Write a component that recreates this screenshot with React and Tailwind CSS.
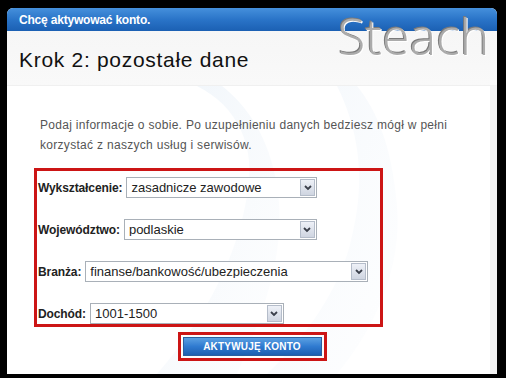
import React from 'react';

const fields = [
  { label: 'Wykształcenie:', value: 'zasadnicze zawodowe', width: 'w-[191px]' },
  { label: 'Województwo:', value: 'podlaskie', width: 'w-[193px]' },
  { label: 'Branża:', value: 'finanse/bankowość/ubezpieczenia', width: 'w-[283px]' },
  { label: 'Dochód:', value: '1001-1500', width: 'w-[194px]' },
];

function FakeSelect({ value, width }) {
  return (
    <div className={`${width} h-[21px] flex items-center bg-white border border-[#a9b0b8] pl-[4px] pr-[1px]`}>
      <span className="flex-1 text-[13px] text-[#222] leading-none truncate">{value}</span>
      <div className="w-[15px] h-[17px] flex items-center justify-center border border-[#b5bdca] bg-gradient-to-b from-[#eef1f7] to-[#cfd5e1]">
        <svg width="8" height="6" viewBox="0 0 8 6">
          <path d="M1 1 L4 4 L7 1" fill="none" stroke="#3a3f4a" strokeWidth="1.8" />
        </svg>
      </div>
    </div>
  );
}

export default function App() {
  return (
    <div className="relative w-[506px] h-[378px] bg-black pl-[7px] pt-[8px] pr-[9px] pb-[4px] font-['Liberation_Sans',Arial,sans-serif]">
      <div className="relative h-full flex flex-col bg-white overflow-hidden rounded-t-[6px]">
        {/* header bar */}
        <div className="h-[23px] shrink-0 flex items-center pl-[12px] bg-gradient-to-b from-[#4590dc] via-[#2a74c8] to-[#1b60b3]">
          <span className="text-white font-bold text-[12px] tracking-[-0.2px]">Chcę aktywować konto.</span>
        </div>

        {/* title */}
        <div className="h-[55px] shrink-0 flex items-center pl-[12px] bg-gradient-to-b from-[#f6f6f6] to-[#f9f9f9] border-b border-[#f0f0f0]">
          <h1 className="text-[21px] text-[#111] leading-none mt-[2px] tracking-[0.7px]">Krok 2: pozostałe dane</h1>
        </div>

        {/* content */}
        <div className="relative flex-1">
          <svg className="absolute inset-0" width="490" height="288" viewBox="0 0 490 288">
            <defs>
              <linearGradient id="sw" x1="0" y1="0" x2="1" y2="1">
                <stop offset="0" stopColor="#dce8f4" stopOpacity="0.9" />
                <stop offset="1" stopColor="#eef4fa" stopOpacity="0.2" />
              </linearGradient>
            </defs>
            <path d="M190 0 C230 20 250 60 240 110 C230 170 200 230 150 288 L230 288 C260 220 280 160 270 100 C262 50 240 20 215 0 Z" fill="url(#sw)" opacity="0.5" />
            <path d="M330 0 C350 40 360 90 345 150 C335 200 300 250 260 288 L330 288 C370 240 395 180 390 120 C385 60 370 25 350 0 Z" fill="url(#sw)" opacity="0.4" />
            <rect x="483" y="0" width="7" height="288" fill="#f2f2f2" />
          </svg>

          <div className="relative flex flex-col">
            <p className="mt-[29px] pl-[33px] text-[12px] leading-[20px] text-[#555] tracking-[0.3px]">
              Podaj informacje o sobie. Po uzupełnieniu danych bedziesz mógł w pełni
              <br />
              korzystać z naszych usług i serwisów.
            </p>

            <div className="mt-[13px] ml-[27px] w-[349px] border-[3px] border-[#cc1515] pt-[6px] pl-[1px] flex flex-col gap-[21px]">
              {fields.map((f) => (
                <div key={f.label} className="flex items-center gap-[4px]">
                  <span className="font-bold text-[12px] text-[#222] tracking-[-0.1px]">{f.label}</span>
                  <FakeSelect value={f.value} width={f.width} />
                </div>
              ))}
            </div>

            <div className="mt-[5px] mx-auto w-[149px] border-[3px] border-[#cc1515] p-[2px]">
              <button className="w-full h-[19px] flex items-center justify-center bg-gradient-to-b from-[#5aa0e2] via-[#2f7ad0] to-[#1c5fb0] border border-[#2a5f9e] text-white font-bold text-[10px] tracking-[0.2px]">
                AKTYWUJĘ KONTO
              </button>
            </div>
          </div>
        </div>
      </div>

      {/* watermark */}
      <span className="absolute left-[338px] top-[2px] font-['Open_Sans',sans-serif] font-light text-[50px] leading-[68px] text-[#ababab] [text-shadow:1px_1px_0_#ffffff,-1px_-1px_0_#7a7a7a]">
        Steach
      </span>
    </div>
  );
}
